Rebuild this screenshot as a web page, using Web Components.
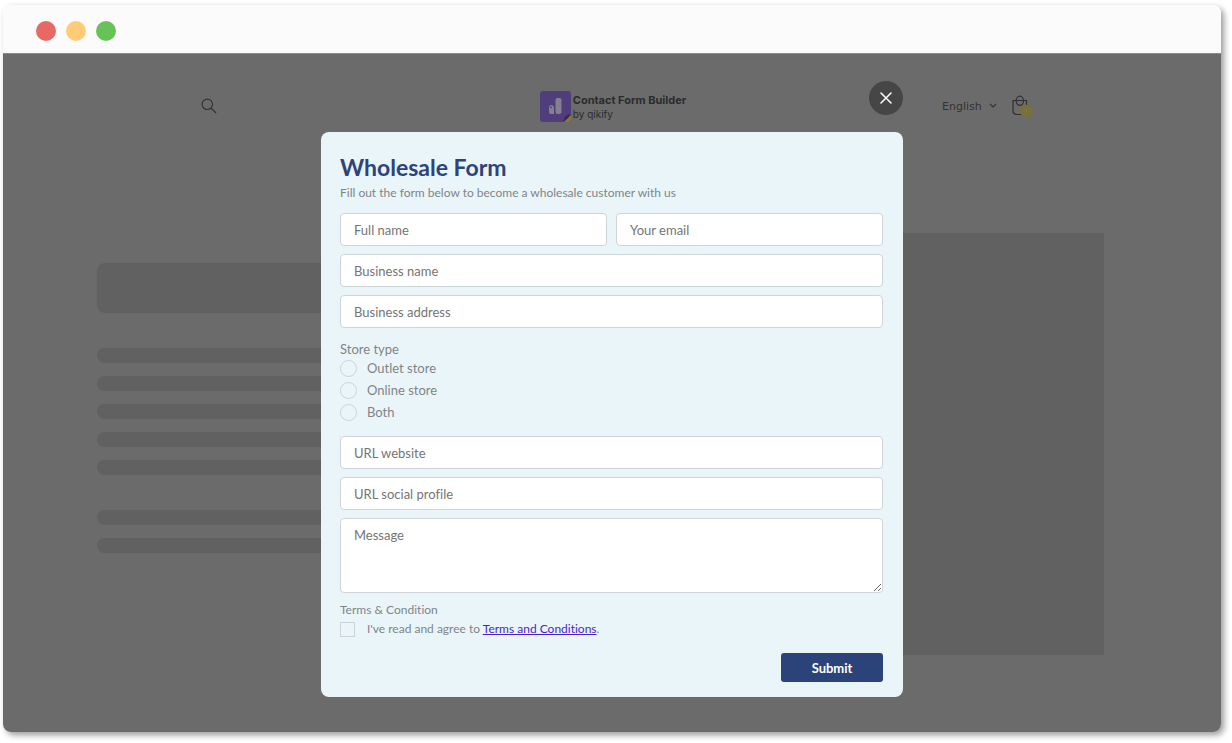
<!DOCTYPE html>
<html lang="en">
<head>
<meta charset="utf-8">
<meta name="viewport" content="width=device-width, initial-scale=1">
<title>Wholesale Form</title>
<style>
body { margin: 0; background: #fff; font: 13px/16px Lato, "Open Sans", sans-serif; font-variant-ligatures: none; color: #7f8587; }
</style>
</head>
<body>
<browser-window>
  <store-page slot="page"></store-page>
  <modal-dialog slot="overlay" heading="Wholesale Form">
    <span slot="intro">Fill out the form below to become a wholesale customer with us</span>
    <wholesale-form></wholesale-form>
  </modal-dialog>
</browser-window>
<script>
const define = (name, html, setup) => {
  const template = document.createElement('template');
  template.innerHTML = html;
  customElements.define(name, class extends HTMLElement {
    constructor() {
      super();
      this.attachShadow({ mode: 'open' }).append(template.content.cloneNode(true));
    }
    connectedCallback() { if (setup) setup(this, this.shadowRoot); }
  });
};

define('browser-window', `
<style>
:host { display: flex; flex-direction: column; min-height: 100vh; box-sizing: border-box; padding: 5px 11px 11px 3px; }
.frame { flex: 1; display: flex; flex-direction: column; border-radius: 8px; box-shadow: 3px 3px 6px rgba(0,0,0,.4); }
header { display: flex; align-items: center; gap: 10px; height: 48px; box-sizing: border-box; padding: 4px 33px 0; background: #fbfbfb; border-radius: 8px 8px 0 0; }
i { width: 20px; height: 20px; border-radius: 50%; background: #e86866; }
i:nth-child(2) { background: #ffcb77; }
i:nth-child(3) { background: #67c358; }
main { flex: 1; display: grid; align-items: start; background: #6b6b6b; border-radius: 0 0 8px 8px; box-shadow: inset 0 1px #8c8c8c; }
::slotted(*) { grid-area: 1 / 1; }
</style>
<div class="frame">
  <header><i></i><i></i><i></i></header>
  <main><slot name="page"></slot><slot name="overlay"></slot></main>
</div>`);

define('brand-logo', `
<style>
:host { display: block; }
a { display: flex; align-items: center; gap: 2px; color: #2b2b2b; text-decoration: none; font: 10px/13px Inter, sans-serif; }
svg { display: block; }
b, span { display: block; }
b { font-size: 11px; line-height: 16px; font-weight: 700; }
</style>
<a href="#">
  <svg width="31" height="31" viewBox="0 0 31 31">
    <rect x="0" y="0" width="31" height="31" rx="3" fill="#4f3d7c"/>
    <path d="M31 24v4a3 3 0 0 1-3 3h-4z" fill="#8a7834"/>
    <path d="M23 31l2-5q1-2 6-3l-3 4z" fill="#3d2752"/>
    <rect x="15.500" y="7" width="6" height="16" rx="2" fill="#85808d"/>
    <path d="M9 16.500a2.500 2.500 0 0 1 5 0V23h-3a2 2 0 0 1-2-2z" fill="#85808d"/>
    <circle cx="11" cy="16.500" r="1" fill="#57476f"/>
  </svg>
  <div><b>Contact Form Builder</b><span>by qikify</span></div>
</a>`);

define('store-header', `
<style>
:host { display: grid; grid-template-columns: 1fr auto 1fr; align-items: center; padding: 0 188px 0 190px; height: 106px; }
button { border: 0; padding: 0; background: none; display: block; }
svg { display: block; }
.search { padding: 0 8px; justify-self: start; }
.tools { display: flex; align-items: center; justify-self: end; gap: 12px; }
label { display: flex; align-items: center; gap: 7px; }
select { appearance: none; border: 0; margin: 0; padding: 2px 0 0; background: none; color: #333; font: 11px/16px "DejaVu Sans", sans-serif; }
</style>
<button class="search" aria-label="Search">
  <svg width="16" height="16" viewBox="0 0 16 16" fill="none" stroke="#333" stroke-width="1.200"><circle cx="6.300" cy="6.300" r="5.200"/><path d="M10 10l5 5"/></svg>
</button>
<brand-logo></brand-logo>
<div class="tools">
  <label><select aria-label="Language"><option>English</option></select>
    <svg width="8" height="6" viewBox="0 0 8 6" fill="none" stroke="#333" stroke-width="1.100"><path d="M1 1l3 3 3-3"/></svg>
  </label>
  <button aria-label="Cart">
    <svg width="24" height="24" viewBox="0 0 24 24" fill="none" stroke="#303030" stroke-width="1.200">
      <path d="M4 6.500h13.500v10q0 4-4 4H8q-4 0-4-4z"/><ellipse cx="10.800" cy="6.800" rx="3.700" ry="4.600"/>
      <circle cx="17.300" cy="17" r="6.300" fill="#78703a" stroke="none"/><path d="M17.300 15v4" stroke="#857e55" stroke-width="1"/>
    </svg>
  </button>
</div>`);

define('skeleton-block', `
<style>
:host { display: grid; gap: 35px; }
div { display: grid; gap: 13px; }
i { height: 15px; border-radius: 8px; background: #616161; }
.title i { height: 50px; }
</style>
<div class="title"><i></i></div>
<div><i></i><i></i><i></i><i></i><i></i></div>
<div><i></i><i></i></div>`);

define('store-page', `
<style>
:host { display: block; }
section { display: grid; grid-template-columns: 1fr 1fr; gap: 60px; padding: 74px 117px 0 94px; align-items: start; }
skeleton-block { margin-top: 30px; }
.picture { height: 422px; background: #616161; }
</style>
<store-header></store-header>
<section><skeleton-block></skeleton-block><div class="picture"></div></section>`);

define('modal-dialog', `
<style>
:host { display: block; position: relative; justify-self: center; box-sizing: border-box; width: min(582px, 100%); margin: 79px 0 35px; padding: 24px 20px 15px 19px; border-radius: 8px; background: #eaf5fa; }
h2 { margin: 0; font-size: 23px; line-height: 22px; font-weight: 700; color: #2d4379; }
p { margin: 6px 0 11px; font-size: 12px; line-height: 18px; }
button { position: absolute; right: 0; top: -51px; width: 34px; height: 34px; border: 0; border-radius: 50%; padding: 0; background: #464646; display: grid; place-items: center; }
</style>
<button aria-label="Close"><svg width="12" height="12" viewBox="0 0 12 12" stroke="#fff" stroke-width="1.500" stroke-linecap="round"><path d="M1 1l10 10M11 1L1 11"/></svg></button>
<h2></h2>
<p><slot name="intro"></slot></p>
<slot></slot>`, (host, root) => {
  root.querySelector('h2').textContent = host.getAttribute('heading');
});

define('text-field', `
<style>
:host { display: block; }
input, textarea { display: block; box-sizing: border-box; width: 100%; height: 33px; margin: 0; border: 1px solid #ced5d9; border-radius: 4px; padding: 0 14px 0 13px; background: #fff; color: #333; font: inherit; outline: 0; }
textarea { height: 75px; padding-top: 8px; }
::placeholder { color: #757575; opacity: 1; }
</style>`, (host, root) => {
  if (root.querySelector('input, textarea')) return;
  const control = document.createElement(host.hasAttribute('multiline') ? 'textarea' : 'input');
  control.placeholder = host.getAttribute('label');
  control.setAttribute('aria-label', host.getAttribute('label'));
  root.append(control);
});

define('choice-group', `
<style>
:host { display: block; }
fieldset { border: 0; margin: 0; padding: 0; min-width: 0; }
legend { padding: 0; line-height: 16px; }
</style>
<fieldset><legend></legend><slot></slot></fieldset>`, (host, root) => {
  root.querySelector('legend').textContent = host.getAttribute('label');
});

define('choice-item', `
<style>
:host { display: block; }
label { display: flex; align-items: center; height: 22px; }
input { appearance: none; box-sizing: border-box; width: 17px; height: 17px; margin: 0 10px 0 0; border: 1px solid #ccd3d8; border-radius: 50%; }
input[type=checkbox] { width: 15px; height: 15px; margin-right: 12px; border-radius: 0; }
</style>
<label><input type="radio"><span><slot></slot></span></label>`, (host, root) => {
  const input = root.querySelector('input');
  input.type = host.getAttribute('type') || 'radio';
  input.name = host.getAttribute('name') || '';
});

define('submit-button', `
<style>
:host { display: block; }
button { width: 102px; height: 29px; border: 0; border-radius: 3px; padding: 0; background: #2c437a; color: #fff; font: inherit; font-weight: 700; }
</style>
<button type="submit"><slot></slot></button>`);

define('wholesale-form', `
<style>
:host { display: block; }
form { display: grid; gap: 8px; margin: 0; }
.pair { display: grid; grid-template-columns: 1fr 1fr; gap: 9px; }
.stores { padding: 5px 0; }
.terms { padding: 1px 0 5px; font-size: 12px; }
a { color: #4b1fd0; }
submit-button { justify-self: end; }
</style>
<form>
  <div class="pair"><text-field label="Full name"></text-field><text-field label="Your email"></text-field></div>
  <text-field label="Business name"></text-field>
  <text-field label="Business address"></text-field>
  <choice-group class="stores" label="Store type">
    <choice-item name="store">Outlet store</choice-item>
    <choice-item name="store">Online store</choice-item>
    <choice-item name="store">Both</choice-item>
  </choice-group>
  <text-field label="URL website"></text-field>
  <text-field label="URL social profile"></text-field>
  <text-field label="Message" multiline></text-field>
  <choice-group class="terms" label="Terms &amp; Condition">
    <choice-item type="checkbox" name="terms">I've read and agree to <a href="#">Terms and Conditions</a>.</choice-item>
  </choice-group>
  <submit-button>Submit</submit-button>
</form>`);
</script>
</body>
</html>
